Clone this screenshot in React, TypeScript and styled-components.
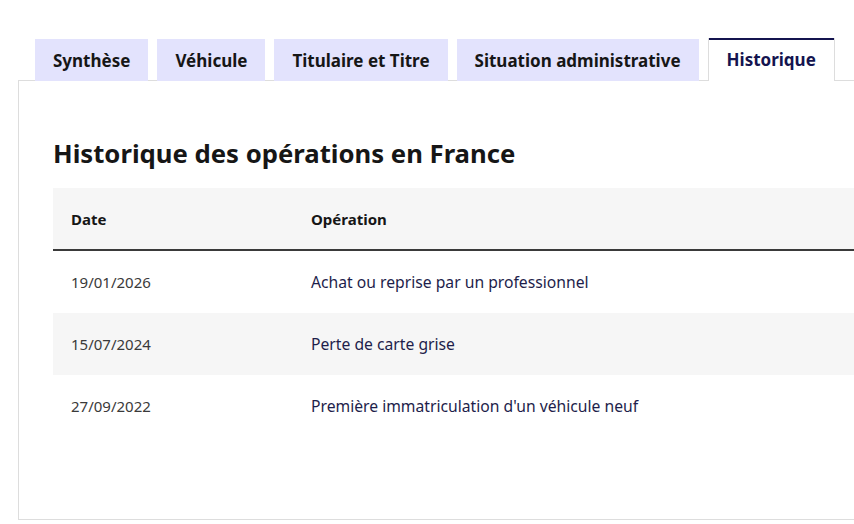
import React from 'react';
import styled, {createGlobalStyle} from "styled-components";

const tabs = ['Synthèse', 'Véhicule', 'Titulaire et Titre', 'Situation administrative', 'Historique'];

const operations = [
    {date: '19/01/2026', label: 'Achat ou reprise par un professionnel'},
    {date: '15/07/2024', label: 'Perte de carte grise'},
    {date: '27/09/2022', label: "Première immatriculation d'un véhicule neuf"},
];

const GlobalStyle = createGlobalStyle`
  html, body {
    margin: 0;
    background: #ffffff;
    overflow: hidden;
  }
  body {
    font-family: "Noto Sans", "Liberation Sans", sans-serif;
    color: #161616;
  }
`;

const App = () => {
    return (
        <>
            <GlobalStyle/>
            <Page>
                <TabList>
                    {tabs.map((tab) => (
                        <Tab key={tab} active={tab === 'Historique'}>{tab}</Tab>
                    ))}
                </TabList>
                <Panel>
                    <Title>Historique des opérations en France</Title>
                    <Table>
                        <thead>
                        <tr>
                            <HeadCell first>Date</HeadCell>
                            <HeadCell>Opération</HeadCell>
                        </tr>
                        </thead>
                        <tbody>
                        {operations.map((op, index) => (
                            <Row key={op.date} striped={index % 2 === 1}>
                                <DateCell>{op.date}</DateCell>
                                <LabelCell>{op.label}</LabelCell>
                            </Row>
                        ))}
                        </tbody>
                    </Table>
                </Panel>
            </Page>
        </>
    );
};

const Page = styled.div`
  width: 900px;
  padding: 38px 0 0 18px;
`;

const TabList = styled.div`
  display: flex;
  gap: 9px;
  padding-left: 17px;
  margin-bottom: -1px;
  position: relative;
  z-index: 1;
`;

const Tab = styled.div<{ active?: boolean }>`
  box-sizing: border-box;
  height: 42px;
  margin-top: 1px;
  padding: 0 18px;
  display: flex;
  align-items: center;
  font-size: 17px;
  font-weight: 700;
  color: #161616;
  background: #e3e3fd;

  ${p => p.active && `
    height: 43px;
    margin-top: 0;
    color: #14144f;
    background: #ffffff;
    box-shadow: inset 0 2px 0 #14144f;
    border-left: 1px solid #dddddd;
    border-right: 1px solid #dddddd;
  `}
`;

const Panel = styled.div`
  box-sizing: border-box;
  height: 440px;
  border: 1px solid #dddddd;
  padding: 55px 0 0 34px;
`;

const Title = styled.h3`
  margin: 0 0 16px;
  font-size: 25.7px;
  line-height: 36px;
  font-weight: 700;
  color: #161616;
`;

const Table = styled.table`
  width: 100%;
  border-collapse: collapse;
  font-size: 15px;
`;

const HeadCell = styled.th<{ first?: boolean }>`
  text-align: left;
  height: 61px;
  padding: 0 18px;
  width: ${p => p.first ? '204px' : 'auto'};
  background: #f6f6f6;
  font-weight: 700;
  color: #161616;
  border-bottom: 2px solid #3a3a3a;
`;

const Row = styled.tr<{ striped?: boolean }>`
  background: ${p => p.striped ? '#f6f6f6' : '#ffffff'};
`;

const DateCell = styled.td`
  height: 62px;
  padding: 0 18px;
  color: #3a3a3a;
`;

const LabelCell = styled.td`
  height: 62px;
  padding: 0 18px;
  font-size: 15.7px;
  color: #1e1e4b;
`;

export default App;
